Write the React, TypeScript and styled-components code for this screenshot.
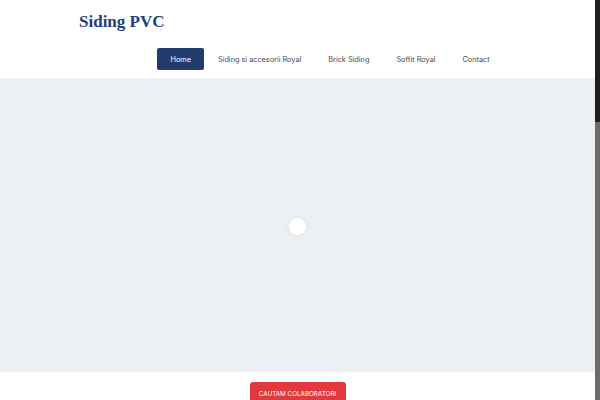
import React from 'react'
import styled, { createGlobalStyle } from 'styled-components'

const Global = createGlobalStyle`
  html, body { margin: 0; padding: 0; background: #fff; overflow: hidden; }
  body { font-family: "Lato", "Open Sans", sans-serif; }
`

const Page = styled.div`
  display: flex;
  width: 600px;
  height: 400px;
`

const Main = styled.main`
  flex: 1;
  min-width: 0;
`

const Scrollbar = styled.aside`
  width: 5px;
  height: 400px;
  background: #6b6b6b;
  display: flex;
  flex-direction: column;
`

const Thumb = styled.div`
  height: 122px;
  background: #1f1f1f;
`

const Header = styled.header`
  height: 79px;
  box-sizing: border-box;
  padding: 12px 0 0 79px;
  display: flex;
  flex-direction: column;
  border-bottom: 1px solid #f3f5f7;
`

const Logo = styled.div`
  font-family: "Liberation Serif", "DejaVu Serif", serif;
  font-weight: 700;
  font-size: 17px;
  color: #1f3e7c;
  line-height: 20px;
`

const Nav = styled.nav`
  display: flex;
  align-items: center;
  margin: 16px 0 0 78px;
`

const NavItem = styled.a<{ $active?: boolean }>`
  display: flex;
  align-items: center;
  height: 22px;
  padding: 0 13.5px;
  box-sizing: border-box;
  border-radius: 2px;
  font-family: "Inter", "Lato", sans-serif;
  font-size: 7.3px;
  color: ${p => (p.$active ? '#fff' : '#4a4a4a')};
  background: ${p => (p.$active ? '#233b6d' : 'transparent')};
  text-decoration: none;
  white-space: nowrap;
`

const Hero = styled.section`
  height: 293px;
  background: #ecf0f3;
  display: flex;
  align-items: center;
  justify-content: center;
`

const Loader = styled.div`
  width: 17px;
  height: 17px;
  border-radius: 50%;
  background: #fff;
  box-shadow: 0 0 6px rgba(0, 0, 0, 0.08);
  margin-top: 2px;
`

const Bottom = styled.section`
  display: flex;
  justify-content: center;
  padding-top: 10px;
`

const Cta = styled.button`
  width: 96px;
  height: 24px;
  border: none;
  border-radius: 3px;
  background: #e0393e;
  color: #fff;
  font-family: "Inter", "Lato", sans-serif;
  font-size: 6.3px;
  padding: 0;
`

const navItems = [
  { label: 'Home', active: true },
  { label: 'Siding si accesorii Royal' },
  { label: 'Brick Siding' },
  { label: 'Soffit Royal' },
  { label: 'Contact' },
]

const App = () => {
  return (
    <Page>
      <Global />
      <Main>
        <Header>
          <Logo>Siding PVC</Logo>
          <Nav>
            {navItems.map(n => (
              <NavItem key={n.label} $active={n.active}>
                {n.label}
              </NavItem>
            ))}
          </Nav>
        </Header>
        <Hero>
          <Loader />
        </Hero>
        <Bottom>
          <Cta>CAUTAM COLABORATORI</Cta>
        </Bottom>
      </Main>
      <Scrollbar>
        <Thumb />
      </Scrollbar>
    </Page>
  )
}

export default App
